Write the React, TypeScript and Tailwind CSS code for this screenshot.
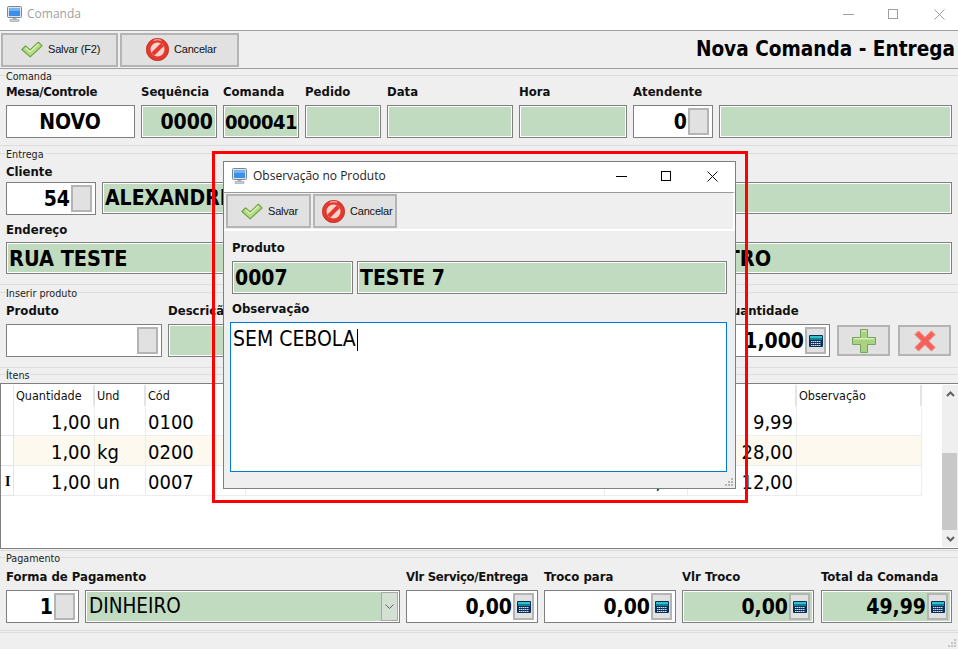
import React from "react";

const CheckIcon = () => (
  <svg width="22" height="17" viewBox="0 0 24 18" className="shrink-0">
    <path d="M1 9 L5 5 L10 9.5 L19 1 L23 5 L10 17 Z" fill="#b4dc86" stroke="#6a9f3a" strokeWidth="1.2" strokeLinejoin="round" />
    <path d="M5 7 L10 11.5 L19 3" fill="none" stroke="#dff2c4" strokeWidth="1.3" />
  </svg>
);

const NoIcon = () => (
  <svg width="23" height="23" viewBox="0 0 24 24" className="shrink-0">
    <circle cx="12" cy="12" r="9.5" fill="#f8d3cb" stroke="#e23a2e" strokeWidth="4.4" />
    <circle cx="12" cy="12" r="11.6" fill="none" stroke="#c42a20" strokeWidth="0.8" />
    <path d="M5.5 15.5 L15.5 5.5 L18.5 8.5 L8.5 18.5 Z" fill="#e23a2e" />
    <path d="M8 2.6 Q12 1 16 2.6" stroke="#f9a79f" strokeWidth="1.3" fill="none" />
  </svg>
);

const CalcIcon = () => (
  <svg width="14" height="12" viewBox="0 0 14 12" className="shrink-0">
    <rect x="0" y="0" width="14" height="12" rx="1" fill="#0b2f5a" />
    <rect x="1" y="1" width="12" height="2" fill="#2fc4c8" />
    <rect x="1" y="3" width="12" height="2" fill="#0f7f9a" />
    <path d="M2 6.5h10M2 8.5h10M2 10.5h10" stroke="#d8e4ea" strokeWidth="1" strokeDasharray="1.5 0.5" />
  </svg>
);

const PlusIcon = () => (
  <svg width="24" height="24" viewBox="0 0 24 24">
    <path d="M8.5 0.5 H15.5 V8.5 H23.5 V15.5 H15.5 V23.5 H8.5 V15.5 H0.5 V8.5 H8.5 Z" fill="#a9d27f" stroke="#76a35e" />
    <path d="M9.5 2 H14.5 M2 9.8 H22" stroke="#d3ecb8" strokeWidth="1.5" />
  </svg>
);

const CrossIcon = () => (
  <svg width="22" height="22" viewBox="0 0 24 24">
    <path d="M5 1 L12 8 L19 1 L23 5 L16 12 L23 19 L19 23 L12 16 L5 23 L1 19 L8 12 L1 5 Z" fill="#f6605a" stroke="#f08a86" strokeWidth="1" strokeLinejoin="round" />
  </svg>
);

const MonitorIcon = () => (
  <svg width="15" height="16" viewBox="0 0 15 16" className="shrink-0">
    <rect x="0.5" y="0.5" width="14" height="11" rx="1" fill="#dfe3ea" stroke="#7d8794" />
    <rect x="2" y="2" width="11" height="8" fill="#3d8ee8" />
    <rect x="2" y="2" width="11" height="3" fill="#6fb5f4" />
    <rect x="5.5" y="12" width="4" height="1.5" fill="#a9b0ba" />
    <rect x="3" y="13.5" width="9" height="2" fill="#c8cdd4" stroke="#8d95a0" strokeWidth="0.5" />
  </svg>
);

const Chevron = ({ down }: { down?: boolean }) => (
  <svg width="9" height="6" viewBox="0 0 9 6">
    <path d={down ? "M1 1 L4.5 4.5 L8 1" : "M1 5 L4.5 1.5 L8 5"} fill="none" stroke="#606060" strokeWidth="2" />
  </svg>
);

const ToolButton = ({ w, gap, pl, icon, text }: { w: string; gap: string; pl: string; icon: React.ReactNode; text: string }) => (
  <button className={`h-[34px] ${w} ${gap} ${pl} flex items-center border-2 border-[#b4b4b4] bg-[#e1e1e1] font-['Liberation_Sans',sans-serif] [font-stretch:normal] text-[11px] tracking-[-0.2px] text-[#111] leading-none`}>
    {icon}
    <span>{text}</span>
  </button>
);

const Input = ({
  w,
  h = "h-[33px]",
  green,
  text,
  align = "left",
  side,
  size = "text-[21px]",
  pl = "pl-px",
  pr = "pr-[2px]",
}: {
  w: string;
  h?: string;
  green?: boolean;
  text?: string;
  align?: "left" | "right" | "center";
  side?: "blank" | "calc";
  size?: string;
  pl?: string;
  pr?: string;
}) => (
  <div className={`${w} ${h} shrink-0 border border-[#7f7f7f] bg-white p-px`}>
    <div
      className={`h-full flex items-center overflow-hidden ${green ? "bg-[#c1dbc1]" : "bg-white"} ${pl} ${pr} ${
        align === "right" ? "justify-end" : align === "center" ? "justify-center" : ""
      }`}
    >
      <span className={`${size} pt-px font-bold text-black whitespace-nowrap leading-none`}>{text}</span>
      {side && (
        <div className="ml-px h-[27px] w-[21px] shrink-0 flex items-center justify-center border-2 border-[#b4b4b4] bg-[#e1e1e1]">
          {side === "calc" && <CalcIcon />}
        </div>
      )}
    </div>
  </div>
);

const Label = ({ children, className = "" }: { children: React.ReactNode; className?: string }) => (
  <div className={`h-[14px] text-[13px] font-bold leading-[16px] text-[#111] whitespace-nowrap ${className}`}>{children}</div>
);

const Col = ({ label, children, gap = "gap-[7px]", labelClass = "" }: { label: string; children: React.ReactNode; gap?: string; labelClass?: string }) => (
  <div className={`flex flex-col ${gap}`}>
    <Label className={labelClass}>{label}</Label>
    {children}
  </div>
);

const Group = ({ title, h, mt, children }: { title: string; h: string; mt: string; children: React.ReactNode }) => (
  <section className={`${h} shrink-0 border-b border-[#dcdcdc] mb-px pt-[6px]`}>
    <div className="h-px bg-[#dcdcdc]" />
    <div className="flex -mt-[6px]">
      <span className="ml-[5px] px-px h-[13px] bg-[#efefef] text-[10.7px] leading-[13px] text-[#222]">{title}</span>
    </div>
    <div className={mt}>{children}</div>
  </section>
);

const cols = "grid grid-cols-[13px_81px_51px_100px_359px_83px_109px_125px]";
const cell = "h-[30px] pt-[2px] border-r border-b border-[#ededed] flex items-center text-[20px] leading-none text-black overflow-hidden";

const rows = [
  { q: "1,00", u: "un", c: "0100", d: "TESTE 1", v: "9,99", t: "9,99" },
  { q: "1,00", u: "kg", c: "0200", d: "TESTE 2", v: "28,00", t: "28,00", alt: true },
  { q: "1,00", u: "un", c: "0007", d: "TESTE 7", v: "12,00", t: "12,00", mark: true },
];

export default function App() {
  return (
    <div className="relative w-[958px] h-[649px] overflow-hidden bg-[#efefef] font-['DejaVu_Sans_Condensed','DejaVu_Sans',sans-serif] [font-stretch:condensed]">
      {/* title bar */}
      <header className="h-[30px] pb-[2px] bg-white flex items-center pl-[7px] font-['Open_Sans',sans-serif] [font-stretch:normal]">
        <MonitorIcon />
        <span className="ml-[5px] text-[12px] text-[#a0a0a0]">Comanda</span>
        <div className="ml-auto flex items-center pr-[13px]">
          <div className="w-[11px] h-px bg-[#a0a0a0]" />
          <div className="ml-[34px] w-[10px] h-[10px] border border-[#a0a0a0]" />
          <svg className="ml-[36px]" width="11" height="11" viewBox="0 0 11 11"><path d="M0.5 0.5 L10.5 10.5 M10.5 0.5 L0.5 10.5" stroke="#a0a0a0" /></svg>
        </div>
      </header>

      {/* toolbar */}
      <div className="h-[39px] border-y border-[#a0a0a0] flex items-center pl-px pr-[3px] gap-[2px]">
        <ToolButton w="w-[117px]" gap="gap-[5px]" pl="pl-[18px]" icon={<CheckIcon />} text="Salvar (F2)" />
        <ToolButton w="w-[119px]" gap="gap-[5px]" pl="pl-[24px]" icon={<NoIcon />} text="Cancelar" />
        <h1 className="ml-auto text-[20.6px] font-bold leading-none text-black whitespace-nowrap">Nova Comanda - Entrega</h1>
      </div>

      <Group title="Comanda" h="h-[77px]" mt="mt-px">
        <div className="flex gap-[6px] pl-[6px]">
          <Col label="Mesa/Controle" labelClass="tracking-[-0.3px]"><Input w="w-[129px]" text="NOVO" align="center" /></Col>
          <Col label="Sequência"><Input w="w-[76px]" green text="0000" align="right" /></Col>
          <Col label="Comanda"><Input w="w-[76px]" green text="000041" align="right" pl="pl-0" pr="pr-0" size="text-[20px] tracking-[-0.5px]" /></Col>
          <Col label="Pedido"><Input w="w-[76px]" green /></Col>
          <Col label="Data"><Input w="w-[126px]" green /></Col>
          <Col label="Hora"><Input w="w-[108px]" green /></Col>
          <Col label="Atendente"><Input w="w-[80px]" text="0" align="right" side="blank" /></Col>
          <div className="self-end"><Input w="w-[233px]" green /></div>
        </div>
      </Group>

      <Group title="Entrega" h="h-[138px]" mt="mt-[3px]">
        <div className="px-[6px] flex flex-col gap-[7px]">
          <div className="flex gap-[6px] items-end">
            <Col label="Cliente" gap="gap-[4px]"><Input w="w-[90px]" text="54" align="right" side="blank" /></Col>
            <div className="mb-px"><Input w="w-[850px]" h="h-[32px]" green text="ALEXANDRE" pl="pl-px" /></div>
          </div>
          <div className="flex gap-[6px] items-end">
            <Col label="Endereço" gap="gap-[6px]"><Input w="w-[594px]" h="h-[32px]" green text="RUA TESTE" size="text-[21.5px]" pl="pl-px" /></Col>
            <Input w="w-[68px]" h="h-[32px]" green />
            <Input w="w-[272px]" h="h-[32px]" green text="CENTRO" size="text-[21.5px]" />
          </div>
        </div>
      </Group>

      <Group title="Inserir produto" h="h-[82px]" mt="mt-[3px]">
        <div className="flex gap-[6px] px-[6px]">
          <Col label="Produto"><Input w="w-[156px]" align="right" side="blank" /></Col>
          <Col label="Descrição"><Input w="w-[548px]" green /></Col>
          <Col label="Quantidade"><Input w="w-[108px]" text="1,000" align="right" side="calc" /></Col>
          <div className="flex self-end gap-[8px] ml-[1px] mb-[1px]">
            <button className="w-[53px] h-[31px] border-2 border-[#b4b4b4] bg-[#e1e1e1] flex items-center justify-center"><PlusIcon /></button>
            <button className="w-[53px] h-[31px] border-2 border-[#b4b4b4] bg-[#e1e1e1] flex items-center justify-center"><CrossIcon /></button>
          </div>
        </div>
      </Group>

      {/* itens */}
      <section className="h-[182px] pt-[5px] border-b border-[#dcdcdc]">
        <div className="h-px bg-[#dcdcdc]" />
        <div className="flex -mt-[6px]">
          <span className="ml-[5px] px-px h-[13px] bg-[#efefef] text-[10.7px] leading-[13px] text-[#222]">Ítens</span>
        </div>
        <div className="mt-px h-[166px] border border-r-0 border-[#7f7f7f] bg-white py-px flex justify-between">
          <div className={`${cols} content-start h-fit`}>
            <div className="h-[21px] border-r border-[#e4e4e4]" />
            {["Quantidade", "Und", "Cód", "Descrição", "Vlr Unit", "Vlr Total", "Observação"].map((h) => (
              <div key={h} className="h-[21px] border-r-2 border-[#e4e4e4] pl-[2px] text-[12.5px] leading-[22px] text-[#111] whitespace-nowrap overflow-hidden">{h}</div>
            ))}
            {rows.map((r) => (
              <React.Fragment key={r.c}>
                <div className={`${cell} pl-[4px] !text-[14px] font-bold !border-[#e4e4e4] font-['Liberation_Serif',serif]`}>{r.mark ? "I" : ""}</div>
                <div className={`${cell} justify-end pr-[3px] ${r.alt ? "bg-[#fdf9ef]" : ""}`}>{r.q}</div>
                <div className={`${cell} pl-[2px] ${r.alt ? "bg-[#fdf9ef]" : ""}`}>{r.u}</div>
                <div className={`${cell} pl-[2px] ${r.alt ? "bg-[#fdf9ef]" : ""}`}>{r.c}</div>
                <div className={`${cell} pl-[2px] ${r.alt ? "bg-[#fdf9ef]" : ""}`}>{r.d}</div>
                <div className={`${cell} justify-end pr-[3px] ${r.alt ? "bg-[#fdf9ef]" : ""}`}>{r.v}</div>
                <div className={`${cell} justify-end pr-[3px] ${r.alt ? "bg-[#fdf9ef]" : ""}`}>{r.t}</div>
                <div className={`${cell} ${r.alt ? "bg-[#fdf9ef]" : ""}`} />
              </React.Fragment>
            ))}
          </div>
          <div className="w-[16px] bg-[#efefef] flex flex-col items-center">
            <div className="h-[18px] flex items-center justify-center"><Chevron /></div>
            <div className="mt-[50px] h-[77px] w-[15px] self-start bg-[#c8c8c8]" />
            <div className="mt-auto h-[16px] flex items-center justify-center"><Chevron down /></div>
          </div>
        </div>
      </section>

      <Group title="Pagamento" h="h-[80px]" mt="mt-[4px]">
        <div className="flex gap-[6px] px-[6px]">
          <Col label="Forma de Pagamento">
            <div className="flex gap-[6px]">
              <Input w="w-[73px]" text="1" align="right" side="blank" />
              <div className="w-[315px] h-[33px] border border-[#7f7f7f] bg-white p-px">
                <div className="h-full bg-[#c1dbc1] flex items-center pl-[2px] text-[20.5px] leading-none text-black">
                  DINHEIRO
                  <div className="ml-auto h-full w-[17px] bg-[#d4e0d4] border border-[#a8a8a8] flex items-center justify-center">
                    <svg width="9" height="5" viewBox="0 0 9 5"><path d="M0.5 0.5 L4.5 4.5 L8.5 0.5" fill="none" stroke="#606060" /></svg>
                  </div>
                </div>
              </div>
            </div>
          </Col>
          <Col label="Vlr Serviço/Entrega" labelClass="tracking-[-0.3px]"><Input w="w-[132px]" text="0,00" align="right" side="calc" /></Col>
          <Col label="Troco para"><Input w="w-[132px]" text="0,00" align="right" side="calc" /></Col>
          <Col label="Vlr Troco"><Input w="w-[132px]" green text="0,00" align="right" side="calc" /></Col>
          <div className="ml-px">
            <Col label="Total da Comanda"><Input w="w-[131px]" green text="49,99" align="right" side="calc" /></Col>
          </div>
        </div>
      </Group>
      <div className="h-px bg-[#dcdcdc]" />

      {/* dialog */}
      <div className="absolute left-[223px] top-[161px] w-[513px] h-[328px] border border-[#7f7f7f] bg-[#efefef] flex flex-col">
        <div className="h-[30px] pb-[2px] bg-white flex items-center pl-[8px] font-['Open_Sans',sans-serif] [font-stretch:normal]">
          <MonitorIcon />
          <span className="ml-[6px] text-[12px] text-[#222]">Observação no Produto</span>
          <div className="ml-auto flex items-center pr-[17px]">
            <div className="w-[11px] h-px bg-black" />
            <div className="ml-[34px] w-[10px] h-[10px] border border-black" />
            <svg className="ml-[36px]" width="11" height="11" viewBox="0 0 11 11"><path d="M0.5 0.5 L10.5 10.5 M10.5 0.5 L0.5 10.5" stroke="#111" /></svg>
          </div>
        </div>
        <div className="h-[39px] border-t border-[#9a9a9a] border-b-2 border-b-white border-r-2 border-r-white flex items-center pl-[2px] gap-[2px]">
          <ToolButton w="w-[85px]" gap="gap-[5px]" pl="pl-[13px]" icon={<CheckIcon />} text="Salvar" />
          <ToolButton w="w-[84px]" gap="gap-[5px]" pl="pl-[7px]" icon={<NoIcon />} text="Cancelar" />
        </div>
        <div className="pl-[8px] pt-[9px]">
          <Label>Produto</Label>
          <div className="flex gap-[4px] mt-[7px]">
            <Input w="w-[121px]" green text="0007" pl="pl-px" />
            <Input w="w-[370px]" green text="TESTE 7" pl="pl-px" />
          </div>
          <Label className="mt-[7px]">Observação</Label>
        </div>
        <div className="ml-[6px] mt-[7px] w-[497px] h-[150px] border border-[#0078d7] bg-white pl-[2px] pt-[4px] text-[21px] leading-[24px] text-black">
          SEM CEBOLA<span className="inline-block w-px h-[22px] ml-px bg-black align-middle" />
        </div>
        <svg width="10" height="10" viewBox="0 0 10 10" className="mt-auto ml-auto mr-px mb-px">
          <path d="M7 1h2v2H7zM4 4h2v2H4zM7 4h2v2H7zM1 7h2v2H1zM4 7h2v2H4zM7 7h2v2H7z" fill="#b4b4b4" />
        </svg>
      </div>

      {/* highlight */}
      <div className="absolute left-[212px] top-[151px] w-[536px] h-[352px] border-[3px] border-[#ff0000] pointer-events-none" />

      <svg width="10" height="10" viewBox="0 0 10 10" className="absolute right-px bottom-px">
        <path d="M7 1h2v2H7zM4 4h2v2H4zM7 4h2v2H7zM1 7h2v2H1zM4 7h2v2H4zM7 7h2v2H7z" fill="#c4c4c4" />
      </svg>
    </div>
  );
}
